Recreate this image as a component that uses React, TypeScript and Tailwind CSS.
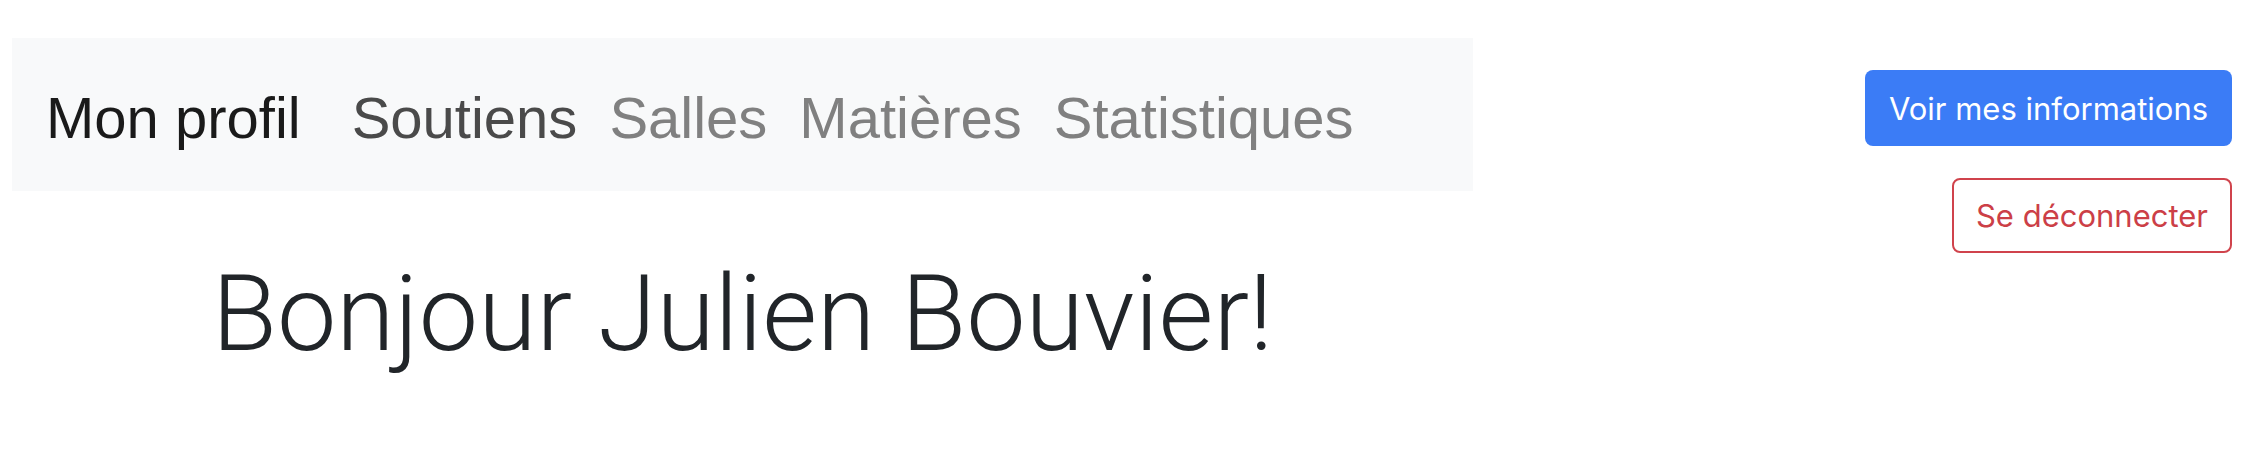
export default function App() {
  const links = [
    { label: "Soutiens", active: true },
    { label: "Salles", active: false },
    { label: "Matières", active: false },
    { label: "Statistiques", active: false },
  ];

  return (
    <div className="w-[2264px] h-[474px] bg-white flex justify-between pl-[12px] pr-[32px]">
      <div className="w-[1461px] flex flex-col">
        <nav className="mt-[38px] h-[153px] bg-[#f8f9fa] flex items-center pl-[34px] pt-[6px] font-['Liberation_Sans',Arial,sans-serif] text-[58px] leading-none">
          <span className="text-[#1a1a1a] mr-[51px]">Mon profil</span>
          <div className="flex gap-[32px]">
            {links.map((l) => (
              <span
                key={l.label}
                className={l.active ? "text-[#4a4a4a]" : "text-[#808080]"}
              >
                {l.label}
              </span>
            ))}
          </div>
        </nav>
        <h1 className="mt-[70px] text-center text-[106px] leading-none font-light text-[#212529] font-['Roboto',Arial,sans-serif]">
          Bonjour Julien Bouvier!
        </h1>
      </div>
      <div className="flex flex-col items-end gap-[32px] pt-[70px] font-['Inter',Arial,sans-serif]">
        <button className="h-[76px] w-[367px] rounded-[8px] bg-[#3b7cf6] text-white text-[31px] leading-none">
          Voir mes informations
        </button>
        <button className="h-[75px] w-[280px] rounded-[8px] border-2 border-[#d0434c] text-[#cc3f47] text-[31px] leading-none">
          Se déconnecter
        </button>
      </div>
    </div>
  );
}
